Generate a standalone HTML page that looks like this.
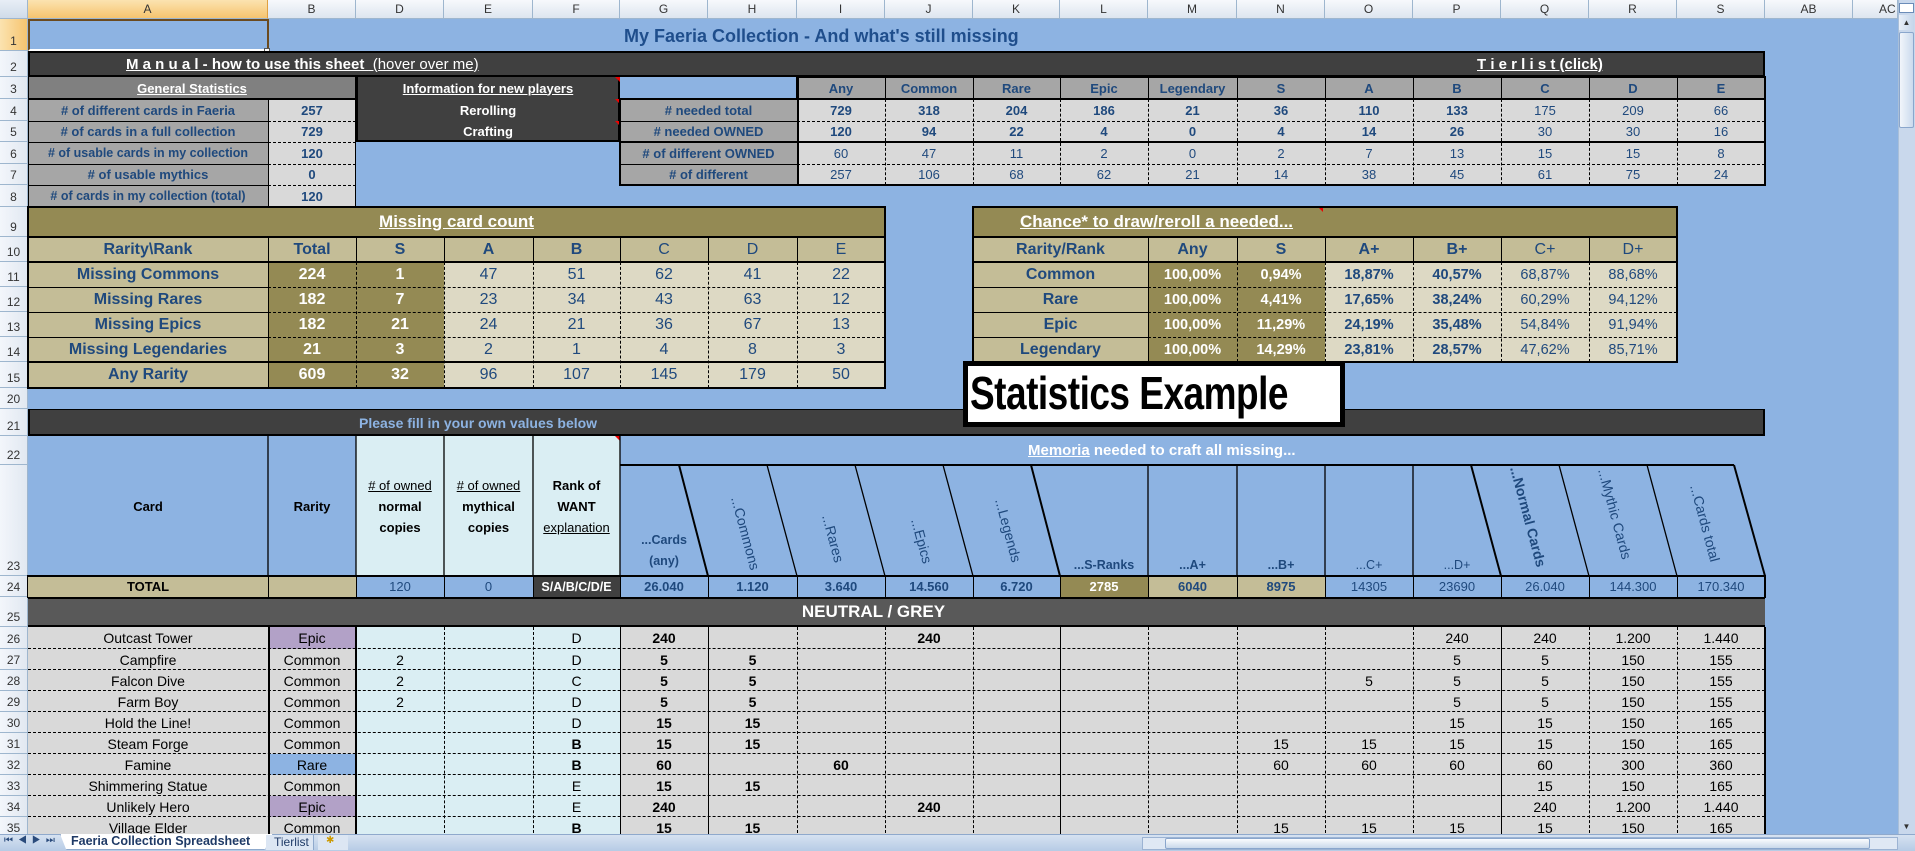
<!DOCTYPE html>
<html><head><meta charset="utf-8"><style>
*{margin:0;padding:0;box-sizing:border-box}
body{width:1915px;height:851px;overflow:hidden;background:#8db3e2;font-family:"Liberation Sans",Arial,sans-serif;color:#1f497d;position:relative}
.c{position:absolute;display:flex;align-items:center;justify-content:center;white-space:nowrap;overflow:hidden;font-size:13px}
.b{font-weight:bold}.w{color:#fff}.k{color:#000}.u{text-decoration:underline}
.l{position:absolute}
.ch{position:absolute;top:0;height:19px;background:linear-gradient(#f7f9fc,#dde5ef);border-right:1px solid #9eb6ce;border-bottom:1px solid #9eb6ce;font-size:12px;color:#333;display:flex;align-items:center;justify-content:center}
.rh{position:absolute;left:0;width:28px;background:linear-gradient(90deg,#f3f6fb,#e1e8f1);border-bottom:1px solid #9eb6ce;border-right:1px solid #9eb6ce;font-size:12px;color:#333;display:flex;align-items:flex-end;justify-content:center;padding-bottom:2px}
.r1{top:19px;height:32px}.r2{top:51px;height:26px}.r3{top:77px;height:22px}.r4{top:99px;height:22px}.r5{top:121px;height:21px}.r6{top:142px;height:22px}.r7{top:164px;height:21px}.r8{top:185px;height:22px}.r9{top:207px;height:30px}.r10{top:237px;height:25px}.r11{top:262px;height:25px}.r12{top:287px;height:25px}.r13{top:312px;height:25px}.r14{top:337px;height:25px}.r15{top:362px;height:26px}.r20{top:388px;height:21px}.r21{top:409px;height:27px}.r22{top:436px;height:29px}.r23{top:465px;height:111px}.r24{top:576px;height:21px}.r25{top:597px;height:30px}
.r26{top:627px;height:22px}.r27{top:649px;height:21px}.r28{top:670px;height:21px}.r29{top:691px;height:21px}.r30{top:712px;height:21px}.r31{top:733px;height:21px}.r32{top:754px;height:21px}.r33{top:775px;height:21px}.r34{top:796px;height:21px}.r35{top:817px;height:21px}
.cA{left:28px;width:240px}.cB{left:268px;width:88px}.cD{left:356px;width:88px}.cE{left:444px;width:89px}.cF{left:533px;width:87px}.cG{left:620px;width:88px}.cH{left:708px;width:89px}.cI{left:797px;width:88px}.cJ{left:885px;width:88px}.cK{left:973px;width:87px}.cL{left:1060px;width:88px}.cM{left:1148px;width:89px}.cN{left:1237px;width:88px}.cO{left:1325px;width:88px}.cP{left:1413px;width:88px}.cQ{left:1501px;width:88px}.cR{left:1589px;width:88px}.cS{left:1677px;width:88px}
.m{font-size:16px}.t{font-size:14px}.p{font-size:14.5px}
.gy{background:#a6a6a6}.gd{background:#808080}.lg{background:#d9d9d9}.dk{background:#404040}.ol{background:#948a54}.tn{background:#c4bd97}.lt{background:#ddd9c4}.cy{background:#daeef3}.bl{background:#8db3e2}.ep{background:#b2a1c7}
.hd{position:absolute;height:0;border-top:1px dashed #000}.vd{position:absolute;width:0;border-left:1px dashed #000}
.hs{position:absolute;height:0;border-top:1px solid #000}.vs{position:absolute;width:0;border-left:1px solid #000}
.fr{position:absolute;border:2px solid #000}
</style></head><body>

<div class="ch" style="left:0;width:28px;background:linear-gradient(#e8eef6,#cfdbe9)"></div>
<div class="ch cA" style="background:linear-gradient(#fbe3b0,#f6c46f);border-right-color:#e0a040">A</div>
<div class="ch cB">B</div><div class="ch cD">D</div><div class="ch cE">E</div><div class="ch cF">F</div><div class="ch cG">G</div><div class="ch cH">H</div><div class="ch cI">I</div><div class="ch cJ">J</div><div class="ch cK">K</div><div class="ch cL">L</div><div class="ch cM">M</div><div class="ch cN">N</div><div class="ch cO">O</div><div class="ch cP">P</div><div class="ch cQ">Q</div><div class="ch cR">R</div><div class="ch cS">S</div>
<div class="ch" style="left:1765px;width:88px">AB</div><div class="ch" style="left:1853px;width:45px;justify-content:flex-start;padding-left:26px">AC</div>

<div class="rh r1" style="background:linear-gradient(90deg,#fbe3b0,#f6c46f)">1</div><div class="rh r2">2</div><div class="rh r3">3</div><div class="rh r4">4</div><div class="rh r5">5</div><div class="rh r6">6</div><div class="rh r7">7</div><div class="rh r8">8</div><div class="rh r9">9</div><div class="rh r10">10</div><div class="rh r11">11</div><div class="rh r12">12</div><div class="rh r13">13</div><div class="rh r14">14</div><div class="rh r15">15</div><div class="rh r20">20</div><div class="rh r21">21</div><div class="rh r22">22</div><div class="rh r23">23</div><div class="rh r24">24</div><div class="rh r25">25</div><div class="rh r26">26</div><div class="rh r27">27</div><div class="rh r28">28</div><div class="rh r29">29</div><div class="rh r30">30</div><div class="rh r31">31</div><div class="rh r32">32</div><div class="rh r33">33</div><div class="rh r34">34</div><div class="rh r35">35</div>

<div class="l" style="left:28px;top:19px;width:241px;height:32px;border:2px solid #6b4a1e;border-bottom:2px solid #fff"></div>
<div class="l" style="left:264px;top:48px;width:6px;height:6px;background:#fff;border:1px solid #555"></div>
<div class="c b" style="left:624px;top:21px;height:30px;font-size:18px;color:#1f4e8c">My Faeria Collection - And what's still missing</div>

<div class="c dk r2" style="left:28px;width:1737px;border:2px solid #000"></div>
<div class="c w u r2" style="left:126px;font-size:15px;font-weight:bold">M a n u a l - how to use this sheet&nbsp;<span style="font-weight:normal">&nbsp;(hover over me)</span></div>
<div class="c w u b r2" style="left:1477px;font-size:15px">T i e r l i s t (click)</div>

<div class="c gd w b u r3" style="left:28px;width:328px">General Statistics</div>
<div class="c gy b r4 cA">#&nbsp;of different cards in Faeria</div><div class="c lg b r4 cB">257</div>
<div class="c gy b r5 cA">#&nbsp;of cards in a full collection</div><div class="c lg b r5 cB">729</div>
<div class="c gy b r6 cA" style="font-size:12.5px">#&nbsp;of usable cards in my collection</div><div class="c lg b r6 cB">120</div>
<div class="c gy b r7 cA">#&nbsp;of usable mythics</div><div class="c lg b r7 cB">0</div>
<div class="c gy b r8 cA" style="font-size:12.5px">#&nbsp;of cards in my collection (total)</div><div class="c lg b r8 cB">120</div>
<div class="hs" style="left:28px;width:240px;top:121px"></div><div class="hs" style="left:28px;width:240px;top:142px"></div><div class="hs" style="left:28px;width:240px;top:164px"></div><div class="hs" style="left:28px;width:240px;top:185px"></div>
<div class="hd" style="left:268px;width:88px;top:121px"></div><div class="hd" style="left:268px;width:88px;top:142px"></div><div class="hd" style="left:268px;width:88px;top:164px"></div><div class="hd" style="left:268px;width:88px;top:185px"></div>
<div class="vs" style="left:268px;top:99px;height:108px"></div>
<div class="l" style="left:28px;top:77px;width:328px;height:130px;border:1px solid #000;border-top:none"></div>
<div class="hs" style="left:28px;width:328px;top:98px;border-top-width:2px"></div>

<div class="l dk" style="left:356px;top:77px;width:264px;height:65px;border:2px solid #000;border-top:none"></div>
<div class="c w b u r3" style="left:356px;width:264px">Information for new players</div>
<div class="c w b r4" style="left:356px;width:264px">Rerolling</div>
<div class="c w b r5" style="left:356px;width:264px">Crafting</div>
<div class="l" style="left:615px;top:77px;border-top:5px solid #e00;border-left:5px solid transparent"></div>
<div class="l" style="left:615px;top:99px;border-top:5px solid #e00;border-left:5px solid transparent"></div>
<div class="l" style="left:615px;top:121px;border-top:5px solid #e00;border-left:5px solid transparent"></div>

<div class="c gy b r3 cI">Any</div><div class="c gy b r3 cJ">Common</div><div class="c gy b r3 cK">Rare</div><div class="c gy b r3 cL">Epic</div><div class="c gy b r3 cM">Legendary</div><div class="c gy b r3 cN">S</div><div class="c gy b r3 cO">A</div><div class="c gy b r3 cP">B</div><div class="c gy b r3 cQ">C</div><div class="c gy b r3 cR">D</div><div class="c gy b r3 cS">E</div>
<div class="c gy b r4" style="left:620px;width:177px">#&nbsp;needed total</div>
<div class="c gy b r5" style="left:620px;width:177px">#&nbsp;needed OWNED</div>
<div class="c gy b r6" style="left:620px;width:177px">#&nbsp;of different OWNED</div>
<div class="c gy b r7" style="left:620px;width:177px">#&nbsp;of different</div>
<div class="c lg b r4 cI">729</div><div class="c lg b r4 cJ">318</div><div class="c lg b r4 cK">204</div><div class="c lg b r4 cL">186</div><div class="c lg b r4 cM">21</div><div class="c lg b r4 cN">36</div><div class="c lg b r4 cO">110</div><div class="c lg b r4 cP">133</div><div class="c lg r4 cQ">175</div><div class="c lg r4 cR">209</div><div class="c lg r4 cS">66</div>
<div class="c lg b r5 cI">120</div><div class="c lg b r5 cJ">94</div><div class="c lg b r5 cK">22</div><div class="c lg b r5 cL">4</div><div class="c lg b r5 cM">0</div><div class="c lg b r5 cN">4</div><div class="c lg b r5 cO">14</div><div class="c lg b r5 cP">26</div><div class="c lg r5 cQ">30</div><div class="c lg r5 cR">30</div><div class="c lg r5 cS">16</div>
<div class="c lg r6 cI">60</div><div class="c lg r6 cJ">47</div><div class="c lg r6 cK">11</div><div class="c lg r6 cL">2</div><div class="c lg r6 cM">0</div><div class="c lg r6 cN">2</div><div class="c lg r6 cO">7</div><div class="c lg r6 cP">13</div><div class="c lg r6 cQ">15</div><div class="c lg r6 cR">15</div><div class="c lg r6 cS">8</div>
<div class="c lg r7 cI">257</div><div class="c lg r7 cJ">106</div><div class="c lg r7 cK">68</div><div class="c lg r7 cL">62</div><div class="c lg r7 cM">21</div><div class="c lg r7 cN">14</div><div class="c lg r7 cO">38</div><div class="c lg r7 cP">45</div><div class="c lg r7 cQ">61</div><div class="c lg r7 cR">75</div><div class="c lg r7 cS">24</div>
<div class="vs" style="left:885px;top:77px;height:22px"></div><div class="vs" style="left:973px;top:77px;height:22px"></div><div class="vs" style="left:1060px;top:77px;height:22px"></div><div class="vs" style="left:1148px;top:77px;height:22px"></div><div class="vs" style="left:1237px;top:77px;height:22px"></div><div class="vs" style="left:1325px;top:77px;height:22px"></div><div class="vs" style="left:1413px;top:77px;height:22px"></div><div class="vs" style="left:1501px;top:77px;height:22px"></div><div class="vs" style="left:1589px;top:77px;height:22px"></div><div class="vs" style="left:1677px;top:77px;height:22px"></div>
<div class="vd" style="left:885px;top:99px;height:86px"></div><div class="vd" style="left:973px;top:99px;height:86px"></div><div class="vd" style="left:1060px;top:99px;height:86px"></div><div class="vd" style="left:1148px;top:99px;height:86px"></div><div class="vd" style="left:1237px;top:99px;height:86px"></div><div class="vd" style="left:1325px;top:99px;height:86px"></div><div class="vd" style="left:1413px;top:99px;height:86px"></div><div class="vd" style="left:1501px;top:99px;height:86px"></div><div class="vd" style="left:1589px;top:99px;height:86px"></div><div class="vd" style="left:1677px;top:99px;height:86px"></div>
<div class="hd" style="left:797px;width:968px;top:121px"></div><div class="hd" style="left:797px;width:968px;top:164px"></div>
<div class="hs" style="left:620px;width:177px;top:121px"></div><div class="hs" style="left:620px;width:177px;top:164px"></div>
<div class="vs" style="left:797px;top:77px;height:108px;border-left-width:2px"></div>
<div class="fr" style="left:796px;top:76px;width:970px;height:24px"></div>
<div class="fr" style="left:619px;top:98px;width:1147px;height:88px"></div>
<div class="hs" style="left:620px;width:1145px;top:141px;border-top-width:2px"></div>

<div class="c ol w b u r9" style="left:28px;width:857px;font-size:17px">Missing card count</div>
<div class="c tn b m r10 cA">Rarity\Rank</div><div class="c tn b m r10 cB">Total</div><div class="c tn b m r10 cD">S</div><div class="c tn b m r10 cE">A</div><div class="c tn b m r10 cF">B</div><div class="c tn m r10 cG">C</div><div class="c tn m r10 cH">D</div><div class="c tn m r10 cI">E</div>
<div class="c tn b m r11 cA">Missing Commons</div><div class="c ol w b m r11 cB">224</div><div class="c ol w b m r11 cD">1</div><div class="c lt m r11 cE">47</div><div class="c lt m r11 cF">51</div><div class="c lt m r11 cG">62</div><div class="c lt m r11 cH">41</div><div class="c lt m r11 cI">22</div>
<div class="c tn b m r12 cA">Missing Rares</div><div class="c ol w b m r12 cB">182</div><div class="c ol w b m r12 cD">7</div><div class="c lt m r12 cE">23</div><div class="c lt m r12 cF">34</div><div class="c lt m r12 cG">43</div><div class="c lt m r12 cH">63</div><div class="c lt m r12 cI">12</div>
<div class="c tn b m r13 cA">Missing Epics</div><div class="c ol w b m r13 cB">182</div><div class="c ol w b m r13 cD">21</div><div class="c lt m r13 cE">24</div><div class="c lt m r13 cF">21</div><div class="c lt m r13 cG">36</div><div class="c lt m r13 cH">67</div><div class="c lt m r13 cI">13</div>
<div class="c tn b m r14 cA">Missing Legendaries</div><div class="c ol w b m r14 cB">21</div><div class="c ol w b m r14 cD">3</div><div class="c lt m r14 cE">2</div><div class="c lt m r14 cF">1</div><div class="c lt m r14 cG">4</div><div class="c lt m r14 cH">8</div><div class="c lt m r14 cI">3</div>
<div class="c tn b m r15 cA">Any Rarity</div><div class="c ol w b m r15 cB">609</div><div class="c ol w b m r15 cD">32</div><div class="c lt m r15 cE">96</div><div class="c lt m r15 cF">107</div><div class="c lt m r15 cG">145</div><div class="c lt m r15 cH">179</div><div class="c lt m r15 cI">50</div>
<div class="vs" style="left:268px;top:237px;height:151px"></div>
<div class="vd" style="left:356px;top:262px;height:126px"></div><div class="vd" style="left:444px;top:262px;height:126px"></div><div class="vd" style="left:533px;top:262px;height:126px"></div><div class="vd" style="left:620px;top:262px;height:126px"></div><div class="vd" style="left:708px;top:262px;height:126px"></div><div class="vd" style="left:797px;top:262px;height:126px"></div>
<div class="vs" style="left:356px;top:237px;height:25px"></div><div class="vs" style="left:444px;top:237px;height:25px"></div><div class="vs" style="left:533px;top:237px;height:25px"></div><div class="vs" style="left:620px;top:237px;height:25px"></div><div class="vs" style="left:708px;top:237px;height:25px"></div><div class="vs" style="left:797px;top:237px;height:25px"></div>
<div class="hs" style="left:28px;width:240px;top:287px"></div><div class="hs" style="left:28px;width:240px;top:312px"></div><div class="hs" style="left:28px;width:240px;top:337px"></div>
<div class="hd" style="left:268px;width:617px;top:287px"></div><div class="hd" style="left:268px;width:617px;top:312px"></div><div class="hd" style="left:268px;width:617px;top:337px"></div>
<div class="hs" style="left:28px;width:857px;top:236px;border-top-width:2px"></div><div class="hs" style="left:28px;width:857px;top:261px;border-top-width:2px"></div><div class="hs" style="left:28px;width:857px;top:361px;border-top-width:2px"></div>
<div class="fr" style="left:27px;top:206px;width:859px;height:183px"></div>

<div class="c ol w b u r9" style="left:973px;width:704px;justify-content:flex-start;padding-left:47px;font-size:17px">Chance* to draw/reroll a needed...</div>
<div class="l" style="left:1318px;top:207px;border-top:5px solid #e00;border-left:5px solid transparent"></div>
<div class="c tn b m r10" style="left:973px;width:175px">Rarity/Rank</div><div class="c tn b m r10 cM">Any</div><div class="c tn b m r10 cN">S</div><div class="c tn b m r10 cO">A+</div><div class="c tn b m r10 cP">B+</div><div class="c tn m r10 cQ">C+</div><div class="c tn m r10 cR">D+</div>
<div class="c tn b m r11" style="left:973px;width:175px">Common</div><div class="c ol w b p r11 cM">100,00%</div><div class="c ol w b p r11 cN">0,94%</div><div class="c lt b p r11 cO">18,87%</div><div class="c lt b p r11 cP">40,57%</div><div class="c lt p r11 cQ">68,87%</div><div class="c lt p r11 cR">88,68%</div>
<div class="c tn b m r12" style="left:973px;width:175px">Rare</div><div class="c ol w b p r12 cM">100,00%</div><div class="c ol w b p r12 cN">4,41%</div><div class="c lt b p r12 cO">17,65%</div><div class="c lt b p r12 cP">38,24%</div><div class="c lt p r12 cQ">60,29%</div><div class="c lt p r12 cR">94,12%</div>
<div class="c tn b m r13" style="left:973px;width:175px">Epic</div><div class="c ol w b p r13 cM">100,00%</div><div class="c ol w b p r13 cN">11,29%</div><div class="c lt b p r13 cO">24,19%</div><div class="c lt b p r13 cP">35,48%</div><div class="c lt p r13 cQ">54,84%</div><div class="c lt p r13 cR">91,94%</div>
<div class="c tn b m r14" style="left:973px;width:175px">Legendary</div><div class="c ol w b p r14 cM">100,00%</div><div class="c ol w b p r14 cN">14,29%</div><div class="c lt b p r14 cO">23,81%</div><div class="c lt b p r14 cP">28,57%</div><div class="c lt p r14 cQ">47,62%</div><div class="c lt p r14 cR">85,71%</div>
<div class="vs" style="left:1148px;top:237px;height:125px"></div>
<div class="vs" style="left:1237px;top:237px;height:25px"></div><div class="vs" style="left:1325px;top:237px;height:25px"></div><div class="vs" style="left:1413px;top:237px;height:25px"></div><div class="vs" style="left:1501px;top:237px;height:25px"></div><div class="vs" style="left:1589px;top:237px;height:25px"></div>
<div class="vd" style="left:1237px;top:262px;height:100px"></div><div class="vd" style="left:1325px;top:262px;height:100px"></div><div class="vd" style="left:1413px;top:262px;height:100px"></div><div class="vd" style="left:1501px;top:262px;height:100px"></div><div class="vd" style="left:1589px;top:262px;height:100px"></div>
<div class="hs" style="left:973px;width:175px;top:287px"></div><div class="hs" style="left:973px;width:175px;top:312px"></div><div class="hs" style="left:973px;width:175px;top:337px"></div>
<div class="hd" style="left:1148px;width:529px;top:287px"></div><div class="hd" style="left:1148px;width:529px;top:312px"></div><div class="hd" style="left:1148px;width:529px;top:337px"></div>
<div class="hs" style="left:973px;width:704px;top:236px;border-top-width:2px"></div><div class="hs" style="left:973px;width:704px;top:261px;border-top-width:2px"></div>
<div class="fr" style="left:972px;top:206px;width:706px;height:157px"></div>

<div class="c dk r21" style="left:28px;width:1737px;border:2px solid #000;border-top-width:1px"></div>
<div class="c b r21" style="left:359px;font-size:14px;color:#8db3e2">Please fill in your own values below</div>

<div class="c b k" style="left:963px;top:361px;width:382px;height:66px;background:#fff;border:5px solid #000;justify-content:flex-start;padding-left:2px;z-index:5"><span style="font-size:37px;display:inline-block;transform:scaleY(1.25);letter-spacing:-0.5px">Statistics Example</span></div>

<div class="c bl b k" style="left:28px;top:436px;width:240px;height:140px">Card</div>
<div class="c bl b k" style="left:268px;top:436px;width:88px;height:140px">Rarity</div>
<div class="c cy k" style="left:356px;top:436px;width:88px;height:140px;flex-direction:column;line-height:21px"><span><span class="u">#&nbsp;of owned</span></span><b>normal</b><b>copies</b></div>
<div class="c cy k" style="left:444px;top:436px;width:89px;height:140px;flex-direction:column;line-height:21px"><span class="u">#&nbsp;of owned</span><b>mythical</b><b>copies</b></div>
<div class="c cy k" style="left:533px;top:436px;width:87px;height:140px;flex-direction:column;line-height:21px"><b>Rank of</b><b>WANT</b><span class="u">explanation</span></div>
<div class="l" style="left:615px;top:436px;border-top:5px solid #e00;border-left:5px solid transparent"></div>
<div class="c w b r22" style="left:1028px;font-size:15px"><span class="u">Memoria</span>&nbsp;needed to craft all missing...</div>
<svg class="l" style="left:0;top:0" width="1915" height="851">
<g stroke="#000" stroke-width="1.3" fill="none">
<line x1="620" y1="465" x2="1734" y2="465" stroke-width="2"/>
<line x1="679" y1="465" x2="708" y2="576" stroke-width="2"/><line x1="767" y1="465" x2="797" y2="576"/><line x1="855" y1="465" x2="885" y2="576"/><line x1="943" y1="465" x2="973" y2="576"/><line x1="1031" y1="465" x2="1060" y2="576" stroke-width="2"/>
<line x1="1148" y1="465" x2="1148" y2="576"/><line x1="1237" y1="465" x2="1237" y2="576"/><line x1="1325" y1="465" x2="1325" y2="576"/><line x1="1413" y1="465" x2="1413" y2="576"/>
<line x1="1471" y1="465" x2="1501" y2="576" stroke-width="2"/><line x1="1559" y1="465" x2="1589" y2="576"/><line x1="1647" y1="465" x2="1677" y2="576"/><line x1="1734" y1="465" x2="1765" y2="576" stroke-width="2"/>
<line x1="268" y1="436" x2="268" y2="597"/><line x1="356" y1="436" x2="356" y2="597"/><line x1="444" y1="436" x2="444" y2="597"/><line x1="533" y1="436" x2="533" y2="597"/><line x1="620" y1="436" x2="620" y2="597"/>
</g>
<g font-family="Liberation Sans, sans-serif" font-size="14" fill="#1f497d">
<text transform="translate(731,498) rotate(75)">...Commons</text>
<text transform="translate(822,516) rotate(75)">...Rares</text>
<text transform="translate(911,520) rotate(75)">...Epics</text>
<text transform="translate(995,500) rotate(75)">...Legends</text>
<text transform="translate(1510,468) rotate(75)" font-weight="bold">...Normal Cards</text>
<text transform="translate(1598,470) rotate(75)">...Mythic Cards</text>
<text transform="translate(1690,486) rotate(75)">...Cards total</text>
</g>
</svg>
<div class="c b" style="left:620px;top:526px;width:88px;height:50px;flex-direction:column;line-height:21px;font-size:12.5px"><span>...Cards</span><span>(any)</span></div>
<div class="c b" style="left:1060px;top:555px;width:88px;height:20px;font-size:12.5px">...S-Ranks</div>
<div class="c b" style="left:1148px;top:555px;width:89px;height:20px;font-size:12.5px">...A+</div>
<div class="c b" style="left:1237px;top:555px;width:88px;height:20px;font-size:12.5px">...B+</div>
<div class="c" style="left:1325px;top:555px;width:88px;height:20px;font-size:12.5px">...C+</div>
<div class="c" style="left:1413px;top:555px;width:88px;height:20px;font-size:12.5px">...D+</div>

<div class="c tn b k r24 cA">TOTAL</div><div class="c tn r24 cB"></div>
<div class="c bl r24 cD">120</div><div class="c bl r24 cE">0</div><div class="c dk w b r24 cF" style="font-size:12.5px">S/A/B/C/D/E</div>
<div class="c bl b r24 cG">26.040</div><div class="c bl b r24 cH">1.120</div><div class="c bl b r24 cI">3.640</div><div class="c bl b r24 cJ">14.560</div><div class="c bl b r24 cK">6.720</div>
<div class="c ol w b r24 cL">2785</div><div class="c tn b r24 cM">6040</div><div class="c tn b r24 cN">8975</div><div class="c bl r24 cO">14305</div><div class="c bl r24 cP">23690</div><div class="c bl r24 cQ">26.040</div><div class="c bl r24 cR">144.300</div><div class="c bl r24 cS">170.340</div>
<div class="fr" style="left:27px;top:575px;width:1739px;height:23px;border-width:2px 2px 1px 1px"></div>
<div class="vs" style="left:268px;top:576px;height:21px"></div><div class="vs" style="left:356px;top:576px;height:21px"></div><div class="vs" style="left:444px;top:576px;height:21px"></div><div class="vs" style="left:533px;top:576px;height:21px"></div><div class="vs" style="left:620px;top:576px;height:21px"></div><div class="vs" style="left:708px;top:576px;height:21px"></div><div class="vs" style="left:797px;top:576px;height:21px"></div><div class="vs" style="left:885px;top:576px;height:21px"></div><div class="vs" style="left:973px;top:576px;height:21px"></div><div class="vs" style="left:1060px;top:576px;height:21px"></div><div class="vs" style="left:1148px;top:576px;height:21px"></div><div class="vs" style="left:1237px;top:576px;height:21px"></div><div class="vs" style="left:1325px;top:576px;height:21px"></div><div class="vs" style="left:1413px;top:576px;height:21px"></div><div class="vs" style="left:1501px;top:576px;height:21px"></div><div class="vs" style="left:1589px;top:576px;height:21px"></div><div class="vs" style="left:1677px;top:576px;height:21px"></div>

<div class="c r25 w b" style="left:28px;width:1737px;background:#595959;border-top:2px solid #000;border-bottom:2px solid #000;font-size:17px;padding-right:46px">NEUTRAL / GREY</div>

<div class="l lg" style="left:28px;top:627px;width:1737px;height:211px"></div>
<div class="l cy" style="left:356px;top:627px;width:264px;height:211px"></div>
<div class="c ep t k r26 cB">Epic</div><div class="c bl t k r32 cB">Rare</div><div class="c ep t k r34 cB">Epic</div>
<div class="hd" style="left:28px;width:1737px;top:648px"></div><div class="hd" style="left:28px;width:1737px;top:669px"></div><div class="hd" style="left:28px;width:1737px;top:690px"></div><div class="hd" style="left:28px;width:1737px;top:711px"></div><div class="hd" style="left:28px;width:1737px;top:732px"></div><div class="hd" style="left:28px;width:1737px;top:753px"></div><div class="hd" style="left:28px;width:1737px;top:774px"></div><div class="hd" style="left:28px;width:1737px;top:795px"></div><div class="hd" style="left:28px;width:1737px;top:816px"></div>
<div class="vs" style="left:268px;top:627px;height:211px;border-left-width:2px"></div><div class="vs" style="left:355px;top:627px;height:211px;border-left-width:2px"></div><div class="vs" style="left:620px;top:627px;height:211px"></div><div class="vs" style="left:708px;top:627px;height:211px"></div><div class="vs" style="left:1060px;top:627px;height:211px"></div><div class="vs" style="left:1501px;top:627px;height:211px"></div><div class="vs" style="left:1764px;top:627px;height:211px;border-left-width:2px"></div>
<div class="vd" style="left:444px;top:627px;height:211px"></div><div class="vd" style="left:533px;top:627px;height:211px"></div><div class="vd" style="left:797px;top:627px;height:211px"></div><div class="vd" style="left:885px;top:627px;height:211px"></div><div class="vd" style="left:973px;top:627px;height:211px"></div><div class="vd" style="left:1148px;top:627px;height:211px"></div><div class="vd" style="left:1237px;top:627px;height:211px"></div><div class="vd" style="left:1325px;top:627px;height:211px"></div><div class="vd" style="left:1413px;top:627px;height:211px"></div><div class="vd" style="left:1589px;top:627px;height:211px"></div><div class="vd" style="left:1677px;top:627px;height:211px"></div>

<div class="c t k r26 cA">Outcast Tower</div><div class="c t k r26 cF">D</div><div class="c t k b r26 cG">240</div><div class="c t k b r26 cJ">240</div><div class="c t k r26 cP">240</div><div class="c t k r26 cQ">240</div><div class="c t k r26 cR">1.200</div><div class="c t k r26 cS">1.440</div>
<div class="c t k r27 cA">Campfire</div><div class="c t k r27 cB">Common</div><div class="c t k r27 cD">2</div><div class="c t k r27 cF">D</div><div class="c t k b r27 cG">5</div><div class="c t k b r27 cH">5</div><div class="c t k r27 cP">5</div><div class="c t k r27 cQ">5</div><div class="c t k r27 cR">150</div><div class="c t k r27 cS">155</div>
<div class="c t k r28 cA">Falcon Dive</div><div class="c t k r28 cB">Common</div><div class="c t k r28 cD">2</div><div class="c t k r28 cF">C</div><div class="c t k b r28 cG">5</div><div class="c t k b r28 cH">5</div><div class="c t k r28 cO">5</div><div class="c t k r28 cP">5</div><div class="c t k r28 cQ">5</div><div class="c t k r28 cR">150</div><div class="c t k r28 cS">155</div>
<div class="c t k r29 cA">Farm Boy</div><div class="c t k r29 cB">Common</div><div class="c t k r29 cD">2</div><div class="c t k r29 cF">D</div><div class="c t k b r29 cG">5</div><div class="c t k b r29 cH">5</div><div class="c t k r29 cP">5</div><div class="c t k r29 cQ">5</div><div class="c t k r29 cR">150</div><div class="c t k r29 cS">155</div>
<div class="c t k r30 cA">Hold the Line!</div><div class="c t k r30 cB">Common</div><div class="c t k r30 cF">D</div><div class="c t k b r30 cG">15</div><div class="c t k b r30 cH">15</div><div class="c t k r30 cP">15</div><div class="c t k r30 cQ">15</div><div class="c t k r30 cR">150</div><div class="c t k r30 cS">165</div>
<div class="c t k r31 cA">Steam Forge</div><div class="c t k r31 cB">Common</div><div class="c t k b r31 cF">B</div><div class="c t k b r31 cG">15</div><div class="c t k b r31 cH">15</div><div class="c t k r31 cN">15</div><div class="c t k r31 cO">15</div><div class="c t k r31 cP">15</div><div class="c t k r31 cQ">15</div><div class="c t k r31 cR">150</div><div class="c t k r31 cS">165</div>
<div class="c t k r32 cA">Famine</div><div class="c t k b r32 cF">B</div><div class="c t k b r32 cG">60</div><div class="c t k b r32 cI">60</div><div class="c t k r32 cN">60</div><div class="c t k r32 cO">60</div><div class="c t k r32 cP">60</div><div class="c t k r32 cQ">60</div><div class="c t k r32 cR">300</div><div class="c t k r32 cS">360</div>
<div class="c t k r33 cA">Shimmering Statue</div><div class="c t k r33 cB">Common</div><div class="c t k r33 cF">E</div><div class="c t k b r33 cG">15</div><div class="c t k b r33 cH">15</div><div class="c t k r33 cQ">15</div><div class="c t k r33 cR">150</div><div class="c t k r33 cS">165</div>
<div class="c t k r34 cA">Unlikely Hero</div><div class="c t k r34 cF">E</div><div class="c t k b r34 cG">240</div><div class="c t k b r34 cJ">240</div><div class="c t k r34 cQ">240</div><div class="c t k r34 cR">1.200</div><div class="c t k r34 cS">1.440</div>
<div class="c t k r35 cA">Village Elder</div><div class="c t k r35 cB">Common</div><div class="c t k b r35 cF">B</div><div class="c t k b r35 cG">15</div><div class="c t k b r35 cH">15</div><div class="c t k r35 cN">15</div><div class="c t k r35 cO">15</div><div class="c t k r35 cP">15</div><div class="c t k r35 cQ">15</div><div class="c t k r35 cR">150</div><div class="c t k r35 cS">165</div>

<div class="l" style="left:1898px;top:0;width:17px;height:834px;background:#c9d8ec;border-left:1px solid #a9bfd9"></div>
<div class="l" style="left:1899px;top:3px;width:15px;height:10px;background:#fff;border:1px solid #6b8cb8"></div>
<div class="l" style="left:1899px;top:15px;width:15px;height:15px;background:linear-gradient(90deg,#e8eff8,#c4d5ea);color:#333;font-size:8px;text-align:center;line-height:15px">▲</div>
<div class="l" style="left:1899px;top:32px;width:15px;height:96px;background:linear-gradient(90deg,#f1f5fb,#cbdaed);border:1px solid #8aa6cc;border-radius:2px"></div>
<div class="l" style="left:1899px;top:820px;width:15px;height:14px;color:#333;font-size:8px;text-align:center;line-height:14px">▼</div>

<div class="l" style="left:0;top:834px;width:1915px;height:17px;background:linear-gradient(#d6e2f1,#b6cbe5);border-top:1px solid #8fa9cc"></div>
<div class="l" style="left:4px;top:835px;font-size:10px;color:#2a4b7c;letter-spacing:5px">⏮◀▶⏭</div>
<div class="l" style="left:60px;top:834px;width:213px;height:16px;background:#fff;border:1px solid #8fa9cc;border-top:none;font-size:12.5px;font-weight:bold;color:#1f3a66;padding-left:10px;line-height:15px;clip-path:polygon(0 0,100% 0,96% 100%,3% 100%)">Faeria Collection Spreadsheet</div>
<div class="l" style="left:266px;top:835px;width:48px;height:15px;background:#dce6f3;border-right:1px solid #8fa9cc;font-size:12px;color:#1f3a66;padding-left:8px;line-height:14px">Tierlist</div>
<div class="l" style="left:318px;top:835px;width:30px;height:15px;background:#dce6f3;font-size:10px;color:#c90;padding-left:8px">✱</div>
<div class="l" style="left:1142px;top:837px;width:756px;height:13px;background:#dfe8f4;border:1px solid #9cb3d3"></div>
<div class="l" style="left:1165px;top:838px;width:705px;height:11px;background:linear-gradient(#fbfcfe,#c9d8ea);border:1px solid #8aa6cc;border-radius:2px"></div>
</body></html>
